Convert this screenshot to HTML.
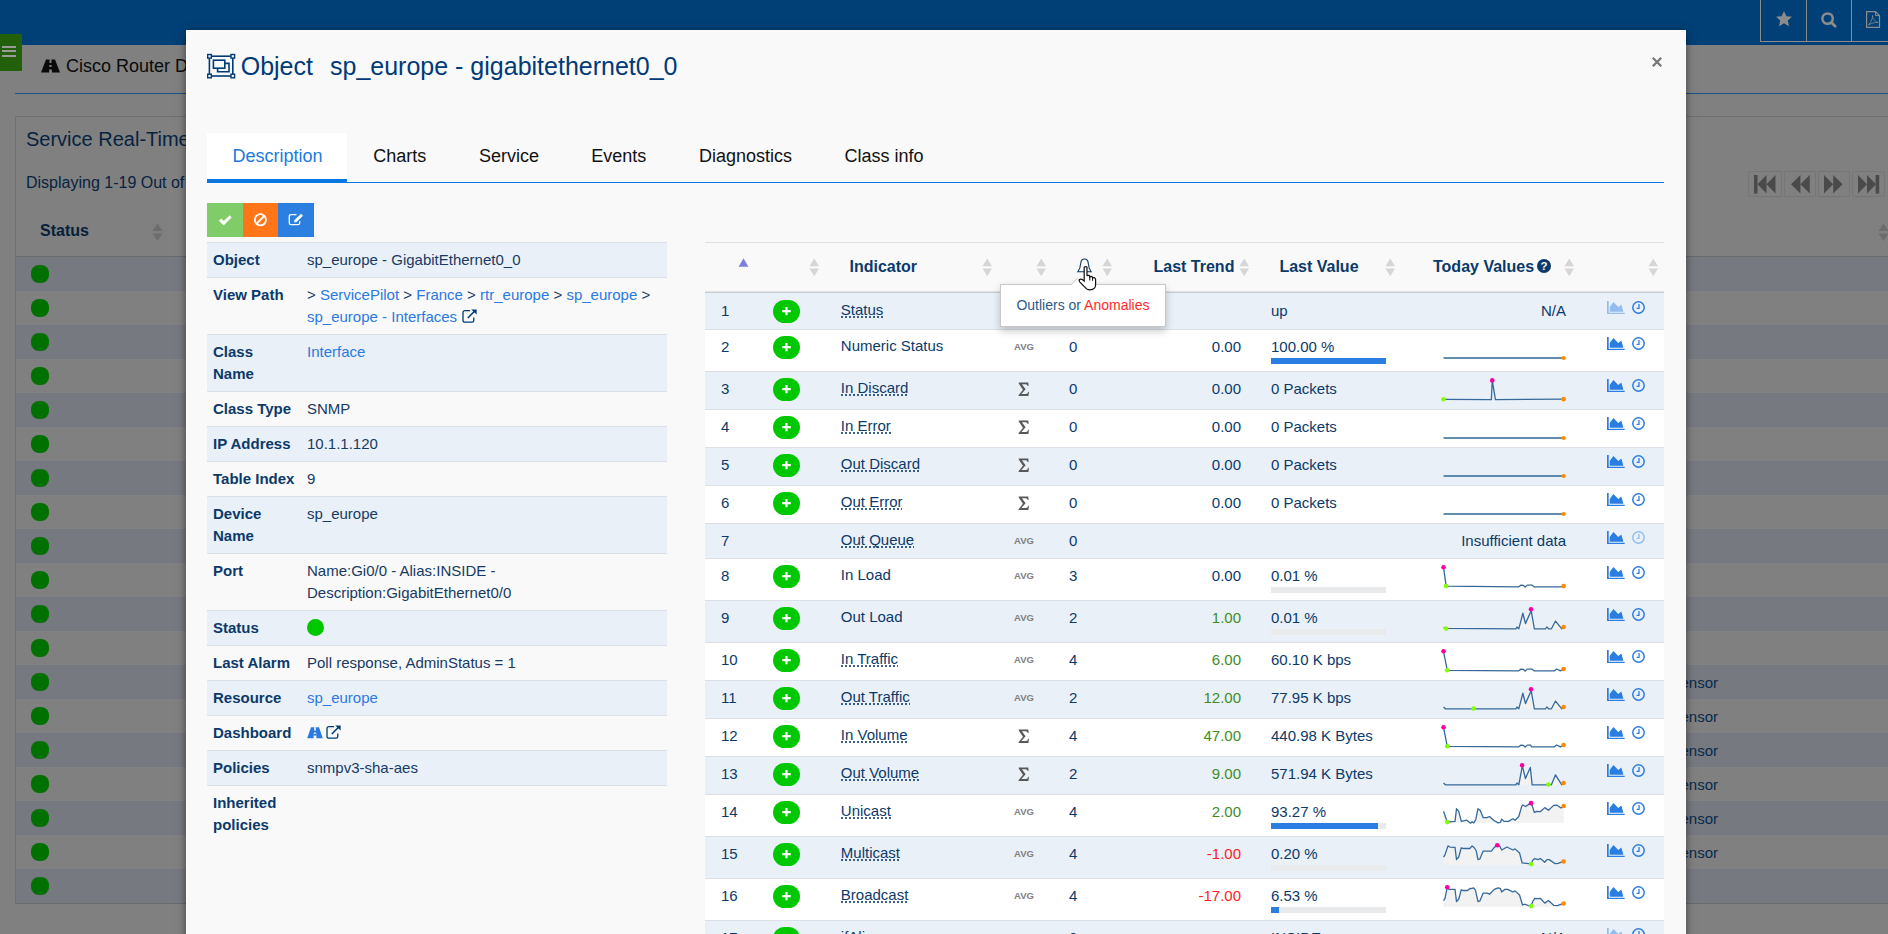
<!DOCTYPE html><html><head><meta charset="utf-8"><style>
*{box-sizing:border-box;margin:0;padding:0}
html,body{width:1888px;height:934px;overflow:hidden}
body{background:#808080;font-family:"Liberation Sans",sans-serif;position:relative;color:#0b3a6a}
.a{position:absolute;white-space:nowrap}
svg{position:absolute;overflow:visible}
.t15{font-size:15px;line-height:20px}
.b{font-weight:bold}
.dl::after{content:"";position:absolute;left:0;right:0;top:17px;height:2px;background:repeating-linear-gradient(90deg,rgba(11,58,106,.8) 0 2px,transparent 2px 4px)}
.sort{position:absolute;width:11px;height:19px}
</style></head><body><div class="a" style="left:0px;top:0px;width:1888px;height:45px;background:#004077;"></div>
<div class="a" style="left:1760px;top:0;width:128px;height:42px;border:1px solid #8a8a8a;border-top:none;border-right:none"></div>
<div class="a" style="left:1806px;top:0px;width:1px;height:42px;background:#8a8a8a;"></div>
<div class="a" style="left:1851px;top:0px;width:1px;height:42px;background:#8a8a8a;"></div>
<svg style="left:1776px;top:11px" width="16" height="16" viewBox="0 0 16 16"><path d="M8 0 L10.4 5.2 L16 5.8 L11.8 9.5 L13 15.2 L8 12.3 L3 15.2 L4.2 9.5 L0 5.8 L5.6 5.2 Z" fill="#8c8c8c"/></svg>
<svg style="left:1821px;top:12px" width="16" height="16" viewBox="0 0 16 16"><circle cx="6.6" cy="6.6" r="5.2" fill="none" stroke="#8c8c8c" stroke-width="2.5"/><path d="M10.2 10.2 L14.2 14.2" stroke="#8c8c8c" stroke-width="2.8" stroke-linecap="round"/></svg>
<svg style="left:1866px;top:11px" width="16" height="18" viewBox="0 0 16 18"><path d="M0.6 0.6 H9.5 L13.5 4.6 V16.4 H0.6 Z" fill="none" stroke="#8c8c8c" stroke-width="1.2"/><path d="M9.5 0.6 V4.6 H13.5" fill="none" stroke="#8c8c8c" stroke-width="1"/><path d="M2.5 14 C5 11 7 7 6.5 4.5 C6.2 7 8.5 10.5 12 11.5 C9 11 5 12.5 2.5 14" fill="none" stroke="#8c8c8c" stroke-width="0.8"/></svg>
<div class="a" style="left:0px;top:34px;width:22px;height:37px;background:#23600c;"></div>
<div class="a" style="left:2px;top:45.6px;width:14px;height:2.3px;background:#9a9a9a;"></div>
<div class="a" style="left:2px;top:50.2px;width:14px;height:2.3px;background:#9a9a9a;"></div>
<div class="a" style="left:2px;top:54.8px;width:14px;height:2.3px;background:#9a9a9a;"></div>
<svg style="left:41px;top:59px" width="19" height="14" viewBox="0 0 19 14"><path d="M0 13.5 L5 0.5 H8.6 L8.1 13.5 Z M10.4 0.5 H14 L19 13.5 H10.9 Z" fill="#0a0a0a"/><rect x="8" y="4" width="3" height="2" fill="#0a0a0a"/><rect x="8" y="8" width="3" height="2.4" fill="#0a0a0a"/></svg>
<div class="a" style="left:66px;top:55.26px;font-size:18px;line-height:22px;color:#0a0a0a;">Cisco Router Dashboard</div>
<div class="a" style="left:15px;top:93px;width:1873px;height:1px;background:#1c4f85;"></div>
<div class="a" style="left:15px;top:116px;width:1880px;height:788px;border:1px solid #707070;border-right:none"></div>
<div class="a" style="left:26px;top:126.57px;font-size:20px;line-height:25px;color:#072340;">Service Real-Time Status</div>
<div class="a" style="left:26px;top:173.26px;font-size:16px;line-height:20px;color:#072340;">Displaying 1-19 Out of 19</div>
<div class="a" style="left:40px;top:221.46px;font-size:16px;line-height:20px;color:#061f3a;font-weight:bold;">Status</div>
<svg style="left:152px;top:223px" width="11" height="19" viewBox="0 0 11 19"><path d="M0.5 8 L5.5 0.5 L10.5 8 Z M0.5 10.5 L5.5 18 L10.5 10.5 Z" fill="#6c6c6c"/></svg>
<svg style="left:1878px;top:223px" width="11" height="19" viewBox="0 0 11 19"><path d="M0.5 8 L5.5 0.5 L10.5 8 Z M0.5 10.5 L5.5 18 L10.5 10.5 Z" fill="#6c6c6c"/></svg>
<div class="a" style="left:16px;top:256px;width:1872px;height:1px;background:#6a6a6a;"></div>
<div class="a" style="left:16px;top:257px;width:1872px;height:34px;background:#76797f;"></div>
<div class="a" style="left:31px;top:265px;width:18px;height:17.5px;border-radius:8px;background:#007000"></div>
<div class="a" style="left:31px;top:299px;width:18px;height:17.5px;border-radius:8px;background:#007000"></div>
<div class="a" style="left:16px;top:325px;width:1872px;height:34px;background:#76797f;"></div>
<div class="a" style="left:31px;top:333px;width:18px;height:17.5px;border-radius:8px;background:#007000"></div>
<div class="a" style="left:31px;top:367px;width:18px;height:17.5px;border-radius:8px;background:#007000"></div>
<div class="a" style="left:16px;top:393px;width:1872px;height:34px;background:#76797f;"></div>
<div class="a" style="left:31px;top:401px;width:18px;height:17.5px;border-radius:8px;background:#007000"></div>
<div class="a" style="left:31px;top:435px;width:18px;height:17.5px;border-radius:8px;background:#007000"></div>
<div class="a" style="left:16px;top:461px;width:1872px;height:34px;background:#76797f;"></div>
<div class="a" style="left:31px;top:469px;width:18px;height:17.5px;border-radius:8px;background:#007000"></div>
<div class="a" style="left:31px;top:503px;width:18px;height:17.5px;border-radius:8px;background:#007000"></div>
<div class="a" style="left:16px;top:529px;width:1872px;height:34px;background:#76797f;"></div>
<div class="a" style="left:31px;top:537px;width:18px;height:17.5px;border-radius:8px;background:#007000"></div>
<div class="a" style="left:31px;top:571px;width:18px;height:17.5px;border-radius:8px;background:#007000"></div>
<div class="a" style="left:16px;top:597px;width:1872px;height:34px;background:#76797f;"></div>
<div class="a" style="left:31px;top:605px;width:18px;height:17.5px;border-radius:8px;background:#007000"></div>
<div class="a" style="left:31px;top:639px;width:18px;height:17.5px;border-radius:8px;background:#007000"></div>
<div class="a" style="left:16px;top:665px;width:1872px;height:34px;background:#76797f;"></div>
<div class="a" style="left:31px;top:673px;width:18px;height:17.5px;border-radius:8px;background:#007000"></div>
<div class="a" style="left:31px;top:707px;width:18px;height:17.5px;border-radius:8px;background:#007000"></div>
<div class="a" style="left:16px;top:733px;width:1872px;height:34px;background:#76797f;"></div>
<div class="a" style="left:31px;top:741px;width:18px;height:17.5px;border-radius:8px;background:#007000"></div>
<div class="a" style="left:31px;top:775px;width:18px;height:17.5px;border-radius:8px;background:#007000"></div>
<div class="a" style="left:16px;top:801px;width:1872px;height:34px;background:#76797f;"></div>
<div class="a" style="left:31px;top:809px;width:18px;height:17.5px;border-radius:8px;background:#007000"></div>
<div class="a" style="left:31px;top:843px;width:18px;height:17.5px;border-radius:8px;background:#007000"></div>
<div class="a" style="left:16px;top:869px;width:1872px;height:34px;background:#76797f;"></div>
<div class="a" style="left:31px;top:877px;width:18px;height:17.5px;border-radius:8px;background:#007000"></div>
<div class="a" style="left:15px;top:903px;width:1873px;height:1px;background:#6a6a6a;"></div>
<div class="a" style="left:1670.5px;top:672.80px;font-size:15px;line-height:19px;color:#062a4d;">Sensor</div>
<div class="a" style="left:1670.5px;top:706.80px;font-size:15px;line-height:19px;color:#062a4d;">Sensor</div>
<div class="a" style="left:1670.5px;top:740.80px;font-size:15px;line-height:19px;color:#062a4d;">Sensor</div>
<div class="a" style="left:1670.5px;top:774.80px;font-size:15px;line-height:19px;color:#062a4d;">Sensor</div>
<div class="a" style="left:1670.5px;top:808.80px;font-size:15px;line-height:19px;color:#062a4d;">Sensor</div>
<div class="a" style="left:1670.5px;top:842.80px;font-size:15px;line-height:19px;color:#062a4d;">Sensor</div>
<div class="a" style="left:1748px;top:171px;width:34px;height:26px;border:1px solid #767676;border-radius:2px"></div>
<div class="a" style="left:1784px;top:171px;width:32px;height:26px;border:1px solid #767676;border-radius:2px"></div>
<div class="a" style="left:1818px;top:171px;width:32px;height:26px;border:1px solid #767676;border-radius:2px"></div>
<div class="a" style="left:1852px;top:171px;width:33px;height:26px;border:1px solid #767676;border-radius:2px"></div>
<svg style="left:1754.2px;top:175px" width="22" height="19" viewBox="0 0 22 19"><rect x="0" y="0" width="3.5" height="18.6" fill="#4a4a4a"/><path d="M3.5 9.3 L12.5 0 V18.6 Z M12.5 9.3 L21.5 0 V18.6 Z" fill="#4a4a4a"/></svg>
<svg style="left:1791px;top:175px" width="19" height="19" viewBox="0 0 19 19"><path d="M0 9.3 L9.4 0 V18.6 Z M9.4 9.3 L18.8 0 V18.6 Z" fill="#4a4a4a"/></svg>
<svg style="left:1823.5px;top:175px" width="19" height="19" viewBox="0 0 19 19"><path d="M18.6 9.3 L9.2 0 V18.6 Z M9.2 9.3 L0 0 V18.6 Z" fill="#4a4a4a"/></svg>
<svg style="left:1857.5px;top:175px" width="22" height="19" viewBox="0 0 22 19"><path d="M18 9.3 L9 0 V18.6 Z M9 9.3 L0 0 V18.6 Z" fill="#4a4a4a"/><rect x="17.6" y="0" width="3.6" height="18.6" fill="#4a4a4a"/></svg>
<div class="a" style="left:186px;top:30px;width:1500px;height:950px;background:#f9f9f9;border:1px solid #fdfbf8;box-shadow:0 2px 8px rgba(0,0,0,.5)"></div>
<svg style="left:207px;top:54px" width="29" height="25" viewBox="0 0 29 25"><g fill="none" stroke="#003a78" stroke-width="1.6"><rect x="2.4" y="2.2" width="23.4" height="19.8"/><rect x="6.4" y="6.2" width="11.4" height="8"/><path d="M17.8 9.4 H22 V17.8 H10.6 V14.2"/></g><g fill="#f9f9f9" stroke="#003a78" stroke-width="1.4"><rect x="0.7" y="0.5" width="3.6" height="3.6"/><rect x="24" y="0.5" width="3.6" height="3.6"/><rect x="0.7" y="20.2" width="3.6" height="3.6"/><rect x="24" y="20.2" width="3.6" height="3.6"/></g></svg>
<div class="a" style="left:240.7px;top:50.84px;font-size:25px;line-height:31px;color:#003a78;">Object</div>
<div class="a" style="left:330px;top:50.84px;font-size:25px;line-height:31px;color:#003a78;">sp_europe - gigabitethernet0_0</div>
<svg style="left:1651px;top:56px" width="12" height="12" viewBox="0 0 12 12"><path d="M1.8 1.8 L10.2 10.2 M10.2 1.8 L1.8 10.2" stroke="#777" stroke-width="2.3"/></svg>
<div class="a" style="left:207px;top:133px;width:140px;height:46px;background:#ffffff;"></div>
<div class="a" style="left:207px;top:179px;width:140px;height:4px;background:#0a78e2;"></div>
<div class="a" style="left:347px;top:182px;width:1317px;height:1px;background:#0a78e2;"></div>
<div class="a" style="left:232.5px;top:145.06px;font-size:18px;line-height:22px;color:#1a7ae0;">Description</div>
<div class="a" style="left:373.2px;top:145.06px;font-size:18px;line-height:22px;color:#111111;">Charts</div>
<div class="a" style="left:478.9px;top:145.06px;font-size:18px;line-height:22px;color:#111111;">Service</div>
<div class="a" style="left:591.3px;top:145.06px;font-size:18px;line-height:22px;color:#111111;">Events</div>
<div class="a" style="left:698.9px;top:145.06px;font-size:18px;line-height:22px;color:#111111;">Diagnostics</div>
<div class="a" style="left:844.5px;top:145.06px;font-size:18px;line-height:22px;color:#111111;">Class info</div>
<div class="a" style="left:207px;top:203px;width:36px;height:34px;background:#80cc68;"></div>
<div class="a" style="left:243px;top:203px;width:35px;height:34px;background:#ff7518;"></div>
<div class="a" style="left:278px;top:203px;width:36px;height:34px;background:#2a7fe0;"></div>
<svg style="left:218px;top:215px" width="14" height="12" viewBox="0 0 14 12"><path d="M0.9 5.7 L3.3 3.6 L5.7 6 L11.7 0.2 L13.6 2.6 L5.6 10.4 Z" fill="#fff"/></svg>
<svg style="left:253px;top:213px" width="14" height="14" viewBox="0 0 14 14"><circle cx="7.4" cy="6.8" r="5.6" fill="none" stroke="#fff" stroke-width="1.8"/><path d="M11.2 3 L3.6 10.6" stroke="#fff" stroke-width="1.8"/></svg>
<svg style="left:288px;top:213px" width="16" height="14" viewBox="0 0 16 14"><path d="M8.5 1.6 H3 Q1.3 1.6 1.3 3.3 V10 Q1.3 11.7 3 11.7 H10 Q11.7 11.7 11.7 10 V8" fill="none" stroke="#fff" stroke-width="1.3"/><path d="M6 9.5 L6.5 7 L13 0.8 L15 2.7 L8.5 9 Z" fill="#fff"/></svg>
<div class="a" style="left:207px;top:242px;width:460px;height:1px;background:#dcdfe4;"></div>
<div class="a" style="left:207px;top:243px;width:460px;height:34px;background:#eaf0f8;"></div>
<div class="a" style="left:213px;top:250.30px;font-size:15px;line-height:19px;color:#0b3a6a;font-weight:bold;">Object</div>
<div class="a" style="left:307px;top:250.30px;font-size:15px;line-height:19px;color:#173a62;">sp_europe - GigabitEthernet0_0</div>
<div class="a" style="left:207px;top:277px;width:460px;height:1px;background:#dcdfe4;"></div>
<div class="a" style="left:213px;top:285.30px;font-size:15px;line-height:19px;color:#0b3a6a;font-weight:bold;">View Path</div>
<div class="a" style="left:307px;top:285.30px;font-size:15px;line-height:19px;color:#173a62;">&gt; <span style="color:#2a7ae2">ServicePilot</span> &gt; <span style="color:#2a7ae2">France</span> &gt; <span style="color:#2a7ae2">rtr_europe</span> &gt; <span style="color:#2a7ae2">sp_europe</span> &gt;</div>
<div class="a" style="left:307px;top:307.30px;font-size:15px;line-height:19px;color:#173a62;"><span style="color:#2a7ae2">sp_europe - Interfaces</span></div>
<div class="a" style="left:207px;top:334px;width:460px;height:1px;background:#dcdfe4;"></div>
<div class="a" style="left:207px;top:335px;width:460px;height:56px;background:#eaf0f8;"></div>
<div class="a" style="left:213px;top:342.30px;font-size:15px;line-height:19px;color:#0b3a6a;font-weight:bold;">Class</div>
<div class="a" style="left:213px;top:364.30px;font-size:15px;line-height:19px;color:#0b3a6a;font-weight:bold;">Name</div>
<div class="a" style="left:307px;top:342.30px;font-size:15px;line-height:19px;color:#173a62;"><span style="color:#2a7ae2">Interface</span></div>
<div class="a" style="left:207px;top:391px;width:460px;height:1px;background:#dcdfe4;"></div>
<div class="a" style="left:213px;top:399.30px;font-size:15px;line-height:19px;color:#0b3a6a;font-weight:bold;">Class Type</div>
<div class="a" style="left:307px;top:399.30px;font-size:15px;line-height:19px;color:#173a62;">SNMP</div>
<div class="a" style="left:207px;top:426px;width:460px;height:1px;background:#dcdfe4;"></div>
<div class="a" style="left:207px;top:427px;width:460px;height:34px;background:#eaf0f8;"></div>
<div class="a" style="left:213px;top:434.30px;font-size:15px;line-height:19px;color:#0b3a6a;font-weight:bold;">IP Address</div>
<div class="a" style="left:307px;top:434.30px;font-size:15px;line-height:19px;color:#173a62;">10.1.1.120</div>
<div class="a" style="left:207px;top:461px;width:460px;height:1px;background:#dcdfe4;"></div>
<div class="a" style="left:213px;top:469.30px;font-size:15px;line-height:19px;color:#0b3a6a;font-weight:bold;">Table Index</div>
<div class="a" style="left:307px;top:469.30px;font-size:15px;line-height:19px;color:#173a62;">9</div>
<div class="a" style="left:207px;top:496px;width:460px;height:1px;background:#dcdfe4;"></div>
<div class="a" style="left:207px;top:497px;width:460px;height:56px;background:#eaf0f8;"></div>
<div class="a" style="left:213px;top:504.30px;font-size:15px;line-height:19px;color:#0b3a6a;font-weight:bold;">Device</div>
<div class="a" style="left:213px;top:526.30px;font-size:15px;line-height:19px;color:#0b3a6a;font-weight:bold;">Name</div>
<div class="a" style="left:307px;top:504.30px;font-size:15px;line-height:19px;color:#173a62;">sp_europe</div>
<div class="a" style="left:207px;top:553px;width:460px;height:1px;background:#dcdfe4;"></div>
<div class="a" style="left:213px;top:561.30px;font-size:15px;line-height:19px;color:#0b3a6a;font-weight:bold;">Port</div>
<div class="a" style="left:307px;top:561.30px;font-size:15px;line-height:19px;color:#173a62;">Name:Gi0/0 - Alias:INSIDE -</div>
<div class="a" style="left:307px;top:583.30px;font-size:15px;line-height:19px;color:#173a62;">Description:GigabitEthernet0/0</div>
<div class="a" style="left:207px;top:610px;width:460px;height:1px;background:#dcdfe4;"></div>
<div class="a" style="left:207px;top:611px;width:460px;height:34px;background:#eaf0f8;"></div>
<div class="a" style="left:213px;top:618.30px;font-size:15px;line-height:19px;color:#0b3a6a;font-weight:bold;">Status</div>
<div class="a" style="left:307px;top:619px;width:17px;height:17px;border-radius:50%;background:#00c800"></div>
<div class="a" style="left:207px;top:645px;width:460px;height:1px;background:#dcdfe4;"></div>
<div class="a" style="left:213px;top:653.30px;font-size:15px;line-height:19px;color:#0b3a6a;font-weight:bold;">Last Alarm</div>
<div class="a" style="left:307px;top:653.30px;font-size:15px;line-height:19px;color:#173a62;">Poll response, AdminStatus = 1</div>
<div class="a" style="left:207px;top:680px;width:460px;height:1px;background:#dcdfe4;"></div>
<div class="a" style="left:207px;top:681px;width:460px;height:34px;background:#eaf0f8;"></div>
<div class="a" style="left:213px;top:688.30px;font-size:15px;line-height:19px;color:#0b3a6a;font-weight:bold;">Resource</div>
<div class="a" style="left:307px;top:688.30px;font-size:15px;line-height:19px;color:#173a62;"><span style="color:#2a7ae2">sp_europe</span></div>
<div class="a" style="left:207px;top:715px;width:460px;height:1px;background:#dcdfe4;"></div>
<div class="a" style="left:213px;top:723.30px;font-size:15px;line-height:19px;color:#0b3a6a;font-weight:bold;">Dashboard</div>
<div class="a" style="left:207px;top:750px;width:460px;height:1px;background:#dcdfe4;"></div>
<div class="a" style="left:207px;top:751px;width:460px;height:34px;background:#eaf0f8;"></div>
<div class="a" style="left:213px;top:758.30px;font-size:15px;line-height:19px;color:#0b3a6a;font-weight:bold;">Policies</div>
<div class="a" style="left:307px;top:758.30px;font-size:15px;line-height:19px;color:#173a62;">snmpv3-sha-aes</div>
<div class="a" style="left:207px;top:785px;width:460px;height:1px;background:#dcdfe4;"></div>
<div class="a" style="left:213px;top:793.30px;font-size:15px;line-height:19px;color:#0b3a6a;font-weight:bold;">Inherited</div>
<div class="a" style="left:213px;top:815.30px;font-size:15px;line-height:19px;color:#0b3a6a;font-weight:bold;">policies</div>
<svg style="left:462px;top:309px" width="16" height="14" viewBox="0 0 16 14"><path d="M8 1.6 H3 Q1 1.6 1 3.6 V11.5 Q1 13.2 3 13.2 H10 Q11.8 13.2 11.8 11.5 V8.5" fill="none" stroke="#003a78" stroke-width="1.3"/><path d="M5.8 9 L13 1.8" stroke="#003a78" stroke-width="1.6"/><path d="M9.3 0.4 H14.6 V5.6 Z" fill="#003a78"/></svg>
<svg style="left:307px;top:727px" width="16" height="12" viewBox="0 0 16 12"><path d="M0.2 11.2 L4 0.2 H7.3 L6.5 11.2 Z M8.7 0.2 H12 L15.8 11.2 H9.5 Z" fill="#2a7ae2"/><rect x="6.8" y="3.5" width="2.4" height="2" fill="#2a7ae2"/><rect x="6.6" y="6.8" width="2.8" height="1.8" fill="#2a7ae2"/></svg>
<svg style="left:326px;top:725px" width="16" height="14" viewBox="0 0 16 14"><path d="M8 1.6 H3 Q1 1.6 1 3.6 V11.5 Q1 13.2 3 13.2 H10 Q11.8 13.2 11.8 11.5 V8.5" fill="none" stroke="#003a78" stroke-width="1.3"/><path d="M5.8 9 L13 1.8" stroke="#003a78" stroke-width="1.6"/><path d="M9.3 0.4 H14.6 V5.6 Z" fill="#003a78"/></svg>
<div class="a" style="left:705px;top:242px;width:959px;height:1px;background:#dcdfe4;"></div>
<svg style="left:738px;top:258px" width="12" height="10" viewBox="0 0 12 10"><path d="M0.6 8.8 L5.5 0.3 L10.4 8.8 Z" fill="#7f7fdc"/></svg>
<svg style="left:809px;top:258px" width="11" height="19" viewBox="0 0 11 19"><path d="M0.5 8.3 L5.25 0.5 L10 8.3 Z M0.5 10.5 L5.25 18.3 L10 10.5 Z" fill="#d6d6d6"/></svg>
<svg style="left:982px;top:258px" width="11" height="19" viewBox="0 0 11 19"><path d="M0.5 8.3 L5.25 0.5 L10 8.3 Z M0.5 10.5 L5.25 18.3 L10 10.5 Z" fill="#d6d6d6"/></svg>
<svg style="left:1036px;top:258px" width="11" height="19" viewBox="0 0 11 19"><path d="M0.5 8.3 L5.25 0.5 L10 8.3 Z M0.5 10.5 L5.25 18.3 L10 10.5 Z" fill="#d6d6d6"/></svg>
<svg style="left:1102px;top:258px" width="11" height="19" viewBox="0 0 11 19"><path d="M0.5 8.3 L5.25 0.5 L10 8.3 Z M0.5 10.5 L5.25 18.3 L10 10.5 Z" fill="#d6d6d6"/></svg>
<svg style="left:1239px;top:258px" width="11" height="19" viewBox="0 0 11 19"><path d="M0.5 8.3 L5.25 0.5 L10 8.3 Z M0.5 10.5 L5.25 18.3 L10 10.5 Z" fill="#d6d6d6"/></svg>
<svg style="left:1384.5px;top:258px" width="11" height="19" viewBox="0 0 11 19"><path d="M0.5 8.3 L5.25 0.5 L10 8.3 Z M0.5 10.5 L5.25 18.3 L10 10.5 Z" fill="#d6d6d6"/></svg>
<svg style="left:1564px;top:258px" width="11" height="19" viewBox="0 0 11 19"><path d="M0.5 8.3 L5.25 0.5 L10 8.3 Z M0.5 10.5 L5.25 18.3 L10 10.5 Z" fill="#d6d6d6"/></svg>
<svg style="left:1647.5px;top:258px" width="11" height="19" viewBox="0 0 11 19"><path d="M0.5 8.3 L5.25 0.5 L10 8.3 Z M0.5 10.5 L5.25 18.3 L10 10.5 Z" fill="#d6d6d6"/></svg>
<div class="a" style="left:849.5px;top:257.46px;font-size:16px;line-height:20px;color:#0b3a6a;font-weight:bold;">Indicator</div>
<div class="a" style="left:1153.5px;top:257.46px;font-size:16px;line-height:20px;color:#0b3a6a;font-weight:bold;">Last Trend</div>
<div class="a" style="left:1279.4px;top:257.46px;font-size:16px;line-height:20px;color:#0b3a6a;font-weight:bold;">Last Value</div>
<div class="a" style="left:1433px;top:257.46px;font-size:16px;line-height:20px;color:#0b3a6a;font-weight:bold;">Today Values</div>
<svg style="left:1537px;top:259px" width="14" height="14" viewBox="0 0 14 14"><circle cx="7" cy="7" r="7" fill="#0b3a6a"/><text x="7" y="11.3" font-family="Liberation Sans" font-weight="bold" font-size="11.5" fill="#f9f9f9" text-anchor="middle">?</text></svg>
<div class="a" style="left:705px;top:291px;width:959px;height:1px;background:#e0e2e6;"></div>
<div class="a" style="left:705px;top:292px;width:959px;height:1px;background:#c9ccd1;"></div>
<div class="a" style="left:705px;top:293px;width:959px;height:36px;background:#eaf0f8;"></div>
<div class="a" style="left:721px;top:300.60px;font-size:15px;line-height:19px;color:#0b3a6a;">1</div>
<div class="a" style="left:773px;top:300px;width:27px;height:23px;border-radius:12px;background:#00c800"></div>
<svg style="left:782px;top:307px" width="9" height="9" viewBox="0 0 9 9"><path d="M0.2 4.1 H8.8 M4.5 0 V8.2" stroke="#fff" stroke-width="2.2"/></svg>
<div class="a dl" style="left:840.8px;top:299.10px;font-size:15px;line-height:22px;color:#0b3a6a">Status</div>
<div class="a" style="left:1271px;top:300.60px;font-size:15px;line-height:19px;color:#0b3a6a;">up</div>
<div class="a" style="right:322px;top:300.60px;font-size:15px;line-height:19px;color:#0b3a6a;">N/A</div>
<svg style="left:1607px;top:300.5px" width="18" height="13" viewBox="0 0 18 13"><path d="M0 0 H1.7 V11.7 H17.7 V13 H0 Z" fill="#93bdf0"/><path d="M2.7 10.8 V5.9 L6.4 1.1 L11.3 5.9 L14.3 3.6 L16.4 10.8 Z" fill="#93bdf0"/></svg>
<svg style="left:1631.5px;top:301px" width="14" height="14" viewBox="0 0 14 14"><circle cx="6.5" cy="6.5" r="5.7" fill="none" stroke="#2a7de1" stroke-width="1.5"/><path d="M7 3 V7.4 H4.6" fill="none" stroke="#2a7de1" stroke-width="1.3"/></svg>
<div class="a" style="left:705px;top:329px;width:959px;height:1px;background:#dcdfe4;"></div>
<div class="a" style="left:705px;top:330px;width:959px;height:41px;background:#ffffff;"></div>
<div class="a" style="left:721px;top:336.60px;font-size:15px;line-height:19px;color:#0b3a6a;">2</div>
<div class="a" style="left:773px;top:336px;width:27px;height:23px;border-radius:12px;background:#00c800"></div>
<svg style="left:782px;top:343px" width="9" height="9" viewBox="0 0 9 9"><path d="M0.2 4.1 H8.8 M4.5 0 V8.2" stroke="#fff" stroke-width="2.2"/></svg>
<div class="a" style="left:840.8px;top:335.10px;font-size:15px;line-height:22px;color:#0b3a6a">Numeric Status</div>
<div class="a" style="left:1014px;top:341.11px;font-size:9.5px;line-height:12px;color:#808080;font-weight:bold;">AVG</div>
<div class="a" style="left:1069px;top:336.60px;font-size:15px;line-height:19px;color:#0b3a6a;">0</div>
<div class="a" style="right:647px;top:336.60px;font-size:15px;line-height:19px;color:#0b3a6a;">0.00</div>
<div class="a" style="left:1271px;top:336.60px;font-size:15px;line-height:19px;color:#0b3a6a;">100.00 %</div>
<div class="a" style="left:1271px;top:358px;width:115px;height:6px;background:#e8eaec;"></div>
<div class="a" style="left:1271px;top:358px;width:115px;height:6px;background:#2a7de1;"></div>
<svg style="left:1443px;top:354.6px" width="124" height="6" viewBox="0 0 124 6"><path d="M0.5 3 H120.7" stroke="#2f6a95" stroke-width="1.4"/><circle cx="120.7" cy="3" r="2.1" fill="#ff8a00"/></svg>
<svg style="left:1607px;top:336.5px" width="18" height="13" viewBox="0 0 18 13"><path d="M0 0 H1.7 V11.7 H17.7 V13 H0 Z" fill="#2a7de1"/><path d="M2.7 10.8 V5.9 L6.4 1.1 L11.3 5.9 L14.3 3.6 L16.4 10.8 Z" fill="#2a7de1"/></svg>
<svg style="left:1631.5px;top:337px" width="14" height="14" viewBox="0 0 14 14"><circle cx="6.5" cy="6.5" r="5.7" fill="none" stroke="#2a7de1" stroke-width="1.5"/><path d="M7 3 V7.4 H4.6" fill="none" stroke="#2a7de1" stroke-width="1.3"/></svg>
<div class="a" style="left:705px;top:371px;width:959px;height:1px;background:#dcdfe4;"></div>
<div class="a" style="left:705px;top:372px;width:959px;height:37px;background:#eaf0f8;"></div>
<div class="a" style="left:721px;top:378.60px;font-size:15px;line-height:19px;color:#0b3a6a;">3</div>
<div class="a" style="left:773px;top:378px;width:27px;height:23px;border-radius:12px;background:#00c800"></div>
<svg style="left:782px;top:385px" width="9" height="9" viewBox="0 0 9 9"><path d="M0.2 4.1 H8.8 M4.5 0 V8.2" stroke="#fff" stroke-width="2.2"/></svg>
<div class="a dl" style="left:840.8px;top:377.10px;font-size:15px;line-height:22px;color:#0b3a6a">In Discard</div>
<svg style="left:1018px;top:382px" width="11.5" height="14.5" viewBox="0 0 13 15" preserveAspectRatio="none"><path d="M0.8 0.6 H11.6 L12 4.2 H11 Q10.6 2.4 8.6 2.4 H4.4 L8.6 7.6 L3.8 12.4 H9 Q11 12.4 11.6 10 H12.4 L11.8 14.4 H0.6 V13.6 L5.6 8 L0.8 1.6 Z" fill="#585858"/></svg>
<div class="a" style="left:1069px;top:378.60px;font-size:15px;line-height:19px;color:#0b3a6a;">0</div>
<div class="a" style="right:647px;top:378.60px;font-size:15px;line-height:19px;color:#0b3a6a;">0.00</div>
<div class="a" style="left:1271px;top:378.60px;font-size:15px;line-height:19px;color:#0b3a6a;">0 Packets</div>
<svg style="left:1435px;top:370px" width="140" height="40" viewBox="0 0 1888 539"><path d="M115,395 L760,400 L772,140 L815,400 L1735,393" fill="none" stroke="#36699a" stroke-width="17.5" stroke-linejoin="round"/><circle cx="115" cy="395" r="31" fill="#80ff00"/><circle cx="772" cy="140" r="31" fill="#ff00a0"/><circle cx="1735" cy="393" r="31" fill="#ff8a00"/></svg>
<svg style="left:1607px;top:378.5px" width="18" height="13" viewBox="0 0 18 13"><path d="M0 0 H1.7 V11.7 H17.7 V13 H0 Z" fill="#2a7de1"/><path d="M2.7 10.8 V5.9 L6.4 1.1 L11.3 5.9 L14.3 3.6 L16.4 10.8 Z" fill="#2a7de1"/></svg>
<svg style="left:1631.5px;top:379px" width="14" height="14" viewBox="0 0 14 14"><circle cx="6.5" cy="6.5" r="5.7" fill="none" stroke="#2a7de1" stroke-width="1.5"/><path d="M7 3 V7.4 H4.6" fill="none" stroke="#2a7de1" stroke-width="1.3"/></svg>
<div class="a" style="left:705px;top:409px;width:959px;height:1px;background:#dcdfe4;"></div>
<div class="a" style="left:705px;top:410px;width:959px;height:37px;background:#ffffff;"></div>
<div class="a" style="left:721px;top:416.60px;font-size:15px;line-height:19px;color:#0b3a6a;">4</div>
<div class="a" style="left:773px;top:416px;width:27px;height:23px;border-radius:12px;background:#00c800"></div>
<svg style="left:782px;top:423px" width="9" height="9" viewBox="0 0 9 9"><path d="M0.2 4.1 H8.8 M4.5 0 V8.2" stroke="#fff" stroke-width="2.2"/></svg>
<div class="a dl" style="left:840.8px;top:415.10px;font-size:15px;line-height:22px;color:#0b3a6a">In Error</div>
<svg style="left:1018px;top:420px" width="11.5" height="14.5" viewBox="0 0 13 15" preserveAspectRatio="none"><path d="M0.8 0.6 H11.6 L12 4.2 H11 Q10.6 2.4 8.6 2.4 H4.4 L8.6 7.6 L3.8 12.4 H9 Q11 12.4 11.6 10 H12.4 L11.8 14.4 H0.6 V13.6 L5.6 8 L0.8 1.6 Z" fill="#585858"/></svg>
<div class="a" style="left:1069px;top:416.60px;font-size:15px;line-height:19px;color:#0b3a6a;">0</div>
<div class="a" style="right:647px;top:416.60px;font-size:15px;line-height:19px;color:#0b3a6a;">0.00</div>
<div class="a" style="left:1271px;top:416.60px;font-size:15px;line-height:19px;color:#0b3a6a;">0 Packets</div>
<svg style="left:1443px;top:434.6px" width="124" height="6" viewBox="0 0 124 6"><path d="M0.5 3 H120.7" stroke="#2f6a95" stroke-width="1.4"/><circle cx="120.7" cy="3" r="2.1" fill="#ff8a00"/></svg>
<svg style="left:1607px;top:416.5px" width="18" height="13" viewBox="0 0 18 13"><path d="M0 0 H1.7 V11.7 H17.7 V13 H0 Z" fill="#2a7de1"/><path d="M2.7 10.8 V5.9 L6.4 1.1 L11.3 5.9 L14.3 3.6 L16.4 10.8 Z" fill="#2a7de1"/></svg>
<svg style="left:1631.5px;top:417px" width="14" height="14" viewBox="0 0 14 14"><circle cx="6.5" cy="6.5" r="5.7" fill="none" stroke="#2a7de1" stroke-width="1.5"/><path d="M7 3 V7.4 H4.6" fill="none" stroke="#2a7de1" stroke-width="1.3"/></svg>
<div class="a" style="left:705px;top:447px;width:959px;height:1px;background:#dcdfe4;"></div>
<div class="a" style="left:705px;top:448px;width:959px;height:37px;background:#eaf0f8;"></div>
<div class="a" style="left:721px;top:454.60px;font-size:15px;line-height:19px;color:#0b3a6a;">5</div>
<div class="a" style="left:773px;top:454px;width:27px;height:23px;border-radius:12px;background:#00c800"></div>
<svg style="left:782px;top:461px" width="9" height="9" viewBox="0 0 9 9"><path d="M0.2 4.1 H8.8 M4.5 0 V8.2" stroke="#fff" stroke-width="2.2"/></svg>
<div class="a dl" style="left:840.8px;top:453.10px;font-size:15px;line-height:22px;color:#0b3a6a">Out Discard</div>
<svg style="left:1018px;top:458px" width="11.5" height="14.5" viewBox="0 0 13 15" preserveAspectRatio="none"><path d="M0.8 0.6 H11.6 L12 4.2 H11 Q10.6 2.4 8.6 2.4 H4.4 L8.6 7.6 L3.8 12.4 H9 Q11 12.4 11.6 10 H12.4 L11.8 14.4 H0.6 V13.6 L5.6 8 L0.8 1.6 Z" fill="#585858"/></svg>
<div class="a" style="left:1069px;top:454.60px;font-size:15px;line-height:19px;color:#0b3a6a;">0</div>
<div class="a" style="right:647px;top:454.60px;font-size:15px;line-height:19px;color:#0b3a6a;">0.00</div>
<div class="a" style="left:1271px;top:454.60px;font-size:15px;line-height:19px;color:#0b3a6a;">0 Packets</div>
<svg style="left:1443px;top:472.6px" width="124" height="6" viewBox="0 0 124 6"><path d="M0.5 3 H120.7" stroke="#2f6a95" stroke-width="1.4"/><circle cx="120.7" cy="3" r="2.1" fill="#ff8a00"/></svg>
<svg style="left:1607px;top:454.5px" width="18" height="13" viewBox="0 0 18 13"><path d="M0 0 H1.7 V11.7 H17.7 V13 H0 Z" fill="#2a7de1"/><path d="M2.7 10.8 V5.9 L6.4 1.1 L11.3 5.9 L14.3 3.6 L16.4 10.8 Z" fill="#2a7de1"/></svg>
<svg style="left:1631.5px;top:455px" width="14" height="14" viewBox="0 0 14 14"><circle cx="6.5" cy="6.5" r="5.7" fill="none" stroke="#2a7de1" stroke-width="1.5"/><path d="M7 3 V7.4 H4.6" fill="none" stroke="#2a7de1" stroke-width="1.3"/></svg>
<div class="a" style="left:705px;top:485px;width:959px;height:1px;background:#dcdfe4;"></div>
<div class="a" style="left:705px;top:486px;width:959px;height:37px;background:#ffffff;"></div>
<div class="a" style="left:721px;top:492.60px;font-size:15px;line-height:19px;color:#0b3a6a;">6</div>
<div class="a" style="left:773px;top:492px;width:27px;height:23px;border-radius:12px;background:#00c800"></div>
<svg style="left:782px;top:499px" width="9" height="9" viewBox="0 0 9 9"><path d="M0.2 4.1 H8.8 M4.5 0 V8.2" stroke="#fff" stroke-width="2.2"/></svg>
<div class="a dl" style="left:840.8px;top:491.10px;font-size:15px;line-height:22px;color:#0b3a6a">Out Error</div>
<svg style="left:1018px;top:496px" width="11.5" height="14.5" viewBox="0 0 13 15" preserveAspectRatio="none"><path d="M0.8 0.6 H11.6 L12 4.2 H11 Q10.6 2.4 8.6 2.4 H4.4 L8.6 7.6 L3.8 12.4 H9 Q11 12.4 11.6 10 H12.4 L11.8 14.4 H0.6 V13.6 L5.6 8 L0.8 1.6 Z" fill="#585858"/></svg>
<div class="a" style="left:1069px;top:492.60px;font-size:15px;line-height:19px;color:#0b3a6a;">0</div>
<div class="a" style="right:647px;top:492.60px;font-size:15px;line-height:19px;color:#0b3a6a;">0.00</div>
<div class="a" style="left:1271px;top:492.60px;font-size:15px;line-height:19px;color:#0b3a6a;">0 Packets</div>
<svg style="left:1443px;top:510.6px" width="124" height="6" viewBox="0 0 124 6"><path d="M0.5 3 H120.7" stroke="#2f6a95" stroke-width="1.4"/><circle cx="120.7" cy="3" r="2.1" fill="#ff8a00"/></svg>
<svg style="left:1607px;top:492.5px" width="18" height="13" viewBox="0 0 18 13"><path d="M0 0 H1.7 V11.7 H17.7 V13 H0 Z" fill="#2a7de1"/><path d="M2.7 10.8 V5.9 L6.4 1.1 L11.3 5.9 L14.3 3.6 L16.4 10.8 Z" fill="#2a7de1"/></svg>
<svg style="left:1631.5px;top:493px" width="14" height="14" viewBox="0 0 14 14"><circle cx="6.5" cy="6.5" r="5.7" fill="none" stroke="#2a7de1" stroke-width="1.5"/><path d="M7 3 V7.4 H4.6" fill="none" stroke="#2a7de1" stroke-width="1.3"/></svg>
<div class="a" style="left:705px;top:523px;width:959px;height:1px;background:#dcdfe4;"></div>
<div class="a" style="left:705px;top:524px;width:959px;height:34px;background:#eaf0f8;"></div>
<div class="a" style="left:721px;top:530.60px;font-size:15px;line-height:19px;color:#0b3a6a;">7</div>
<div class="a dl" style="left:840.8px;top:529.10px;font-size:15px;line-height:22px;color:#0b3a6a">Out Queue</div>
<div class="a" style="left:1014px;top:535.11px;font-size:9.5px;line-height:12px;color:#808080;font-weight:bold;">AVG</div>
<div class="a" style="left:1069px;top:530.60px;font-size:15px;line-height:19px;color:#0b3a6a;">0</div>
<div class="a" style="right:322px;top:530.60px;font-size:15px;line-height:19px;color:#0b3a6a;">Insufficient data</div>
<svg style="left:1607px;top:530.5px" width="18" height="13" viewBox="0 0 18 13"><path d="M0 0 H1.7 V11.7 H17.7 V13 H0 Z" fill="#2a7de1"/><path d="M2.7 10.8 V5.9 L6.4 1.1 L11.3 5.9 L14.3 3.6 L16.4 10.8 Z" fill="#2a7de1"/></svg>
<svg style="left:1631.5px;top:531px" width="14" height="14" viewBox="0 0 14 14"><circle cx="6.5" cy="6.5" r="5.7" fill="none" stroke="#93bdf0" stroke-width="1.5"/><path d="M7 3 V7.4 H4.6" fill="none" stroke="#93bdf0" stroke-width="1.3"/></svg>
<div class="a" style="left:705px;top:558px;width:959px;height:1px;background:#dcdfe4;"></div>
<div class="a" style="left:705px;top:559px;width:959px;height:41px;background:#ffffff;"></div>
<div class="a" style="left:721px;top:565.60px;font-size:15px;line-height:19px;color:#0b3a6a;">8</div>
<div class="a" style="left:773px;top:565px;width:27px;height:23px;border-radius:12px;background:#00c800"></div>
<svg style="left:782px;top:572px" width="9" height="9" viewBox="0 0 9 9"><path d="M0.2 4.1 H8.8 M4.5 0 V8.2" stroke="#fff" stroke-width="2.2"/></svg>
<div class="a" style="left:840.8px;top:564.10px;font-size:15px;line-height:22px;color:#0b3a6a">In Load</div>
<div class="a" style="left:1014px;top:570.11px;font-size:9.5px;line-height:12px;color:#808080;font-weight:bold;">AVG</div>
<div class="a" style="left:1069px;top:565.60px;font-size:15px;line-height:19px;color:#0b3a6a;">3</div>
<div class="a" style="right:647px;top:565.60px;font-size:15px;line-height:19px;color:#0b3a6a;">0.00</div>
<div class="a" style="left:1271px;top:565.60px;font-size:15px;line-height:19px;color:#0b3a6a;">0.01 %</div>
<div class="a" style="left:1271px;top:587px;width:115px;height:6px;background:#e8eaec;"></div>
<svg style="left:1435px;top:559px" width="140" height="40" viewBox="0 0 1888 539"><path d="M115,112 L150,365 L1130,375 L1160,352 L1190,355 L1215,378 L1245,352 L1310,352 L1335,375 L1700,375 L1735,365" fill="none" stroke="#36699a" stroke-width="17.5" stroke-linejoin="round"/><circle cx="150" cy="365" r="31" fill="#80ff00"/><circle cx="115" cy="112" r="31" fill="#ff00a0"/><circle cx="1735" cy="365" r="31" fill="#ff8a00"/></svg>
<svg style="left:1607px;top:565.5px" width="18" height="13" viewBox="0 0 18 13"><path d="M0 0 H1.7 V11.7 H17.7 V13 H0 Z" fill="#2a7de1"/><path d="M2.7 10.8 V5.9 L6.4 1.1 L11.3 5.9 L14.3 3.6 L16.4 10.8 Z" fill="#2a7de1"/></svg>
<svg style="left:1631.5px;top:566px" width="14" height="14" viewBox="0 0 14 14"><circle cx="6.5" cy="6.5" r="5.7" fill="none" stroke="#2a7de1" stroke-width="1.5"/><path d="M7 3 V7.4 H4.6" fill="none" stroke="#2a7de1" stroke-width="1.3"/></svg>
<div class="a" style="left:705px;top:600px;width:959px;height:1px;background:#dcdfe4;"></div>
<div class="a" style="left:705px;top:601px;width:959px;height:41px;background:#eaf0f8;"></div>
<div class="a" style="left:721px;top:607.60px;font-size:15px;line-height:19px;color:#0b3a6a;">9</div>
<div class="a" style="left:773px;top:607px;width:27px;height:23px;border-radius:12px;background:#00c800"></div>
<svg style="left:782px;top:614px" width="9" height="9" viewBox="0 0 9 9"><path d="M0.2 4.1 H8.8 M4.5 0 V8.2" stroke="#fff" stroke-width="2.2"/></svg>
<div class="a" style="left:840.8px;top:606.10px;font-size:15px;line-height:22px;color:#0b3a6a">Out Load</div>
<div class="a" style="left:1014px;top:612.11px;font-size:9.5px;line-height:12px;color:#808080;font-weight:bold;">AVG</div>
<div class="a" style="left:1069px;top:607.60px;font-size:15px;line-height:19px;color:#0b3a6a;">2</div>
<div class="a" style="right:647px;top:607.60px;font-size:15px;line-height:19px;color:#3e8e1e;">1.00</div>
<div class="a" style="left:1271px;top:607.60px;font-size:15px;line-height:19px;color:#0b3a6a;">0.01 %</div>
<div class="a" style="left:1271px;top:629px;width:115px;height:6px;background:#e8eaec;"></div>
<svg style="left:1435px;top:601px" width="140" height="40" viewBox="0 0 1888 539"><path d="M115,360 L150,370 L1090,375 L1105,350 L1130,375 L1185,165 L1220,305 L1297,130 L1340,375 L1490,375 L1510,350 L1530,375 L1570,375 L1625,270 L1710,375 L1735,350 L1735,375 L115,375 Z" fill="#f2f2f2"/><path d="M115,360 L150,370 L1090,375 L1105,350 L1130,375 L1185,165 L1220,305 L1297,130 L1340,375 L1490,375 L1510,350 L1530,375 L1570,375 L1625,270 L1710,375 L1735,350" fill="none" stroke="#36699a" stroke-width="17.5" stroke-linejoin="round"/><circle cx="150" cy="370" r="31" fill="#80ff00"/><circle cx="1295" cy="112" r="31" fill="#ff00a0"/><circle cx="1735" cy="350" r="31" fill="#ff8a00"/></svg>
<svg style="left:1607px;top:607.5px" width="18" height="13" viewBox="0 0 18 13"><path d="M0 0 H1.7 V11.7 H17.7 V13 H0 Z" fill="#2a7de1"/><path d="M2.7 10.8 V5.9 L6.4 1.1 L11.3 5.9 L14.3 3.6 L16.4 10.8 Z" fill="#2a7de1"/></svg>
<svg style="left:1631.5px;top:608px" width="14" height="14" viewBox="0 0 14 14"><circle cx="6.5" cy="6.5" r="5.7" fill="none" stroke="#2a7de1" stroke-width="1.5"/><path d="M7 3 V7.4 H4.6" fill="none" stroke="#2a7de1" stroke-width="1.3"/></svg>
<div class="a" style="left:705px;top:642px;width:959px;height:1px;background:#dcdfe4;"></div>
<div class="a" style="left:705px;top:643px;width:959px;height:37px;background:#ffffff;"></div>
<div class="a" style="left:721px;top:649.60px;font-size:15px;line-height:19px;color:#0b3a6a;">10</div>
<div class="a" style="left:773px;top:649px;width:27px;height:23px;border-radius:12px;background:#00c800"></div>
<svg style="left:782px;top:656px" width="9" height="9" viewBox="0 0 9 9"><path d="M0.2 4.1 H8.8 M4.5 0 V8.2" stroke="#fff" stroke-width="2.2"/></svg>
<div class="a dl" style="left:840.8px;top:648.10px;font-size:15px;line-height:22px;color:#0b3a6a">In Traffic</div>
<div class="a" style="left:1014px;top:654.11px;font-size:9.5px;line-height:12px;color:#808080;font-weight:bold;">AVG</div>
<div class="a" style="left:1069px;top:649.60px;font-size:15px;line-height:19px;color:#0b3a6a;">4</div>
<div class="a" style="right:647px;top:649.60px;font-size:15px;line-height:19px;color:#3e8e1e;">6.00</div>
<div class="a" style="left:1271px;top:649.60px;font-size:15px;line-height:19px;color:#0b3a6a;">60.10 K bps</div>
<svg style="left:1435px;top:643px" width="140" height="40" viewBox="0 0 1888 539"><path d="M115,112 L165,368 L1130,375 L1160,352 L1190,355 L1215,378 L1245,352 L1310,352 L1335,375 L1610,375 L1640,350 L1690,375 L1735,350" fill="none" stroke="#36699a" stroke-width="17.5" stroke-linejoin="round"/><circle cx="165" cy="368" r="31" fill="#80ff00"/><circle cx="115" cy="112" r="31" fill="#ff00a0"/><circle cx="1735" cy="350" r="31" fill="#ff8a00"/></svg>
<svg style="left:1607px;top:649.5px" width="18" height="13" viewBox="0 0 18 13"><path d="M0 0 H1.7 V11.7 H17.7 V13 H0 Z" fill="#2a7de1"/><path d="M2.7 10.8 V5.9 L6.4 1.1 L11.3 5.9 L14.3 3.6 L16.4 10.8 Z" fill="#2a7de1"/></svg>
<svg style="left:1631.5px;top:650px" width="14" height="14" viewBox="0 0 14 14"><circle cx="6.5" cy="6.5" r="5.7" fill="none" stroke="#2a7de1" stroke-width="1.5"/><path d="M7 3 V7.4 H4.6" fill="none" stroke="#2a7de1" stroke-width="1.3"/></svg>
<div class="a" style="left:705px;top:680px;width:959px;height:1px;background:#dcdfe4;"></div>
<div class="a" style="left:705px;top:681px;width:959px;height:37px;background:#eaf0f8;"></div>
<div class="a" style="left:721px;top:687.60px;font-size:15px;line-height:19px;color:#0b3a6a;">11</div>
<div class="a" style="left:773px;top:687px;width:27px;height:23px;border-radius:12px;background:#00c800"></div>
<svg style="left:782px;top:694px" width="9" height="9" viewBox="0 0 9 9"><path d="M0.2 4.1 H8.8 M4.5 0 V8.2" stroke="#fff" stroke-width="2.2"/></svg>
<div class="a dl" style="left:840.8px;top:686.10px;font-size:15px;line-height:22px;color:#0b3a6a">Out Traffic</div>
<div class="a" style="left:1014px;top:692.11px;font-size:9.5px;line-height:12px;color:#808080;font-weight:bold;">AVG</div>
<div class="a" style="left:1069px;top:687.60px;font-size:15px;line-height:19px;color:#0b3a6a;">2</div>
<div class="a" style="right:647px;top:687.60px;font-size:15px;line-height:19px;color:#3e8e1e;">12.00</div>
<div class="a" style="left:1271px;top:687.60px;font-size:15px;line-height:19px;color:#0b3a6a;">77.95 K bps</div>
<svg style="left:1435px;top:681px" width="140" height="40" viewBox="0 0 1888 539"><path d="M115,350 L140,375 L1090,375 L1105,350 L1130,375 L1185,165 L1220,305 L1297,130 L1340,375 L1490,375 L1510,350 L1530,375 L1570,375 L1625,270 L1710,375 L1735,350 L1735,375 L115,375 Z" fill="#f2f2f2"/><path d="M115,350 L140,375 L1090,375 L1105,350 L1130,375 L1185,165 L1220,305 L1297,130 L1340,375 L1490,375 L1510,350 L1530,375 L1570,375 L1625,270 L1710,375 L1735,350" fill="none" stroke="#36699a" stroke-width="17.5" stroke-linejoin="round"/><circle cx="520" cy="370" r="31" fill="#80ff00"/><circle cx="1295" cy="112" r="31" fill="#ff00a0"/><circle cx="1735" cy="350" r="31" fill="#ff8a00"/></svg>
<svg style="left:1607px;top:687.5px" width="18" height="13" viewBox="0 0 18 13"><path d="M0 0 H1.7 V11.7 H17.7 V13 H0 Z" fill="#2a7de1"/><path d="M2.7 10.8 V5.9 L6.4 1.1 L11.3 5.9 L14.3 3.6 L16.4 10.8 Z" fill="#2a7de1"/></svg>
<svg style="left:1631.5px;top:688px" width="14" height="14" viewBox="0 0 14 14"><circle cx="6.5" cy="6.5" r="5.7" fill="none" stroke="#2a7de1" stroke-width="1.5"/><path d="M7 3 V7.4 H4.6" fill="none" stroke="#2a7de1" stroke-width="1.3"/></svg>
<div class="a" style="left:705px;top:718px;width:959px;height:1px;background:#dcdfe4;"></div>
<div class="a" style="left:705px;top:719px;width:959px;height:37px;background:#ffffff;"></div>
<div class="a" style="left:721px;top:725.60px;font-size:15px;line-height:19px;color:#0b3a6a;">12</div>
<div class="a" style="left:773px;top:725px;width:27px;height:23px;border-radius:12px;background:#00c800"></div>
<svg style="left:782px;top:732px" width="9" height="9" viewBox="0 0 9 9"><path d="M0.2 4.1 H8.8 M4.5 0 V8.2" stroke="#fff" stroke-width="2.2"/></svg>
<div class="a dl" style="left:840.8px;top:724.10px;font-size:15px;line-height:22px;color:#0b3a6a">In Volume</div>
<svg style="left:1018px;top:729px" width="11.5" height="14.5" viewBox="0 0 13 15" preserveAspectRatio="none"><path d="M0.8 0.6 H11.6 L12 4.2 H11 Q10.6 2.4 8.6 2.4 H4.4 L8.6 7.6 L3.8 12.4 H9 Q11 12.4 11.6 10 H12.4 L11.8 14.4 H0.6 V13.6 L5.6 8 L0.8 1.6 Z" fill="#585858"/></svg>
<div class="a" style="left:1069px;top:725.60px;font-size:15px;line-height:19px;color:#0b3a6a;">4</div>
<div class="a" style="right:647px;top:725.60px;font-size:15px;line-height:19px;color:#3e8e1e;">47.00</div>
<div class="a" style="left:1271px;top:725.60px;font-size:15px;line-height:19px;color:#0b3a6a;">440.98 K Bytes</div>
<svg style="left:1435px;top:719px" width="140" height="40" viewBox="0 0 1888 539"><path d="M115,112 L165,368 L1130,375 L1160,352 L1190,355 L1215,378 L1245,352 L1290,352 L1300,375 L1610,375 L1640,350 L1690,375 L1735,350" fill="none" stroke="#36699a" stroke-width="17.5" stroke-linejoin="round"/><circle cx="165" cy="368" r="31" fill="#80ff00"/><circle cx="115" cy="112" r="31" fill="#ff00a0"/><circle cx="1735" cy="350" r="31" fill="#ff8a00"/></svg>
<svg style="left:1607px;top:725.5px" width="18" height="13" viewBox="0 0 18 13"><path d="M0 0 H1.7 V11.7 H17.7 V13 H0 Z" fill="#2a7de1"/><path d="M2.7 10.8 V5.9 L6.4 1.1 L11.3 5.9 L14.3 3.6 L16.4 10.8 Z" fill="#2a7de1"/></svg>
<svg style="left:1631.5px;top:726px" width="14" height="14" viewBox="0 0 14 14"><circle cx="6.5" cy="6.5" r="5.7" fill="none" stroke="#2a7de1" stroke-width="1.5"/><path d="M7 3 V7.4 H4.6" fill="none" stroke="#2a7de1" stroke-width="1.3"/></svg>
<div class="a" style="left:705px;top:756px;width:959px;height:1px;background:#dcdfe4;"></div>
<div class="a" style="left:705px;top:757px;width:959px;height:37px;background:#eaf0f8;"></div>
<div class="a" style="left:721px;top:763.60px;font-size:15px;line-height:19px;color:#0b3a6a;">13</div>
<div class="a" style="left:773px;top:763px;width:27px;height:23px;border-radius:12px;background:#00c800"></div>
<svg style="left:782px;top:770px" width="9" height="9" viewBox="0 0 9 9"><path d="M0.2 4.1 H8.8 M4.5 0 V8.2" stroke="#fff" stroke-width="2.2"/></svg>
<div class="a dl" style="left:840.8px;top:762.10px;font-size:15px;line-height:22px;color:#0b3a6a">Out Volume</div>
<svg style="left:1018px;top:767px" width="11.5" height="14.5" viewBox="0 0 13 15" preserveAspectRatio="none"><path d="M0.8 0.6 H11.6 L12 4.2 H11 Q10.6 2.4 8.6 2.4 H4.4 L8.6 7.6 L3.8 12.4 H9 Q11 12.4 11.6 10 H12.4 L11.8 14.4 H0.6 V13.6 L5.6 8 L0.8 1.6 Z" fill="#585858"/></svg>
<div class="a" style="left:1069px;top:763.60px;font-size:15px;line-height:19px;color:#0b3a6a;">2</div>
<div class="a" style="right:647px;top:763.60px;font-size:15px;line-height:19px;color:#3e8e1e;">9.00</div>
<div class="a" style="left:1271px;top:763.60px;font-size:15px;line-height:19px;color:#0b3a6a;">571.94 K Bytes</div>
<svg style="left:1435px;top:757px" width="140" height="40" viewBox="0 0 1888 539"><path d="M115,350 L140,375 L1090,375 L1105,350 L1130,375 L1178,120 L1220,290 L1285,140 L1310,375 L1500,375 L1530,370 L1570,375 L1625,240 L1710,375 L1735,350 L1735,375 L115,375 Z" fill="#f2f2f2"/><path d="M115,350 L140,375 L1090,375 L1105,350 L1130,375 L1178,120 L1220,290 L1285,140 L1310,375 L1500,375 L1530,370 L1570,375 L1625,240 L1710,375 L1735,350" fill="none" stroke="#36699a" stroke-width="17.5" stroke-linejoin="round"/><circle cx="1530" cy="370" r="31" fill="#80ff00"/><circle cx="1175" cy="112" r="31" fill="#ff00a0"/><circle cx="1735" cy="350" r="31" fill="#ff8a00"/></svg>
<svg style="left:1607px;top:763.5px" width="18" height="13" viewBox="0 0 18 13"><path d="M0 0 H1.7 V11.7 H17.7 V13 H0 Z" fill="#2a7de1"/><path d="M2.7 10.8 V5.9 L6.4 1.1 L11.3 5.9 L14.3 3.6 L16.4 10.8 Z" fill="#2a7de1"/></svg>
<svg style="left:1631.5px;top:764px" width="14" height="14" viewBox="0 0 14 14"><circle cx="6.5" cy="6.5" r="5.7" fill="none" stroke="#2a7de1" stroke-width="1.5"/><path d="M7 3 V7.4 H4.6" fill="none" stroke="#2a7de1" stroke-width="1.3"/></svg>
<div class="a" style="left:705px;top:794px;width:959px;height:1px;background:#dcdfe4;"></div>
<div class="a" style="left:705px;top:795px;width:959px;height:41px;background:#ffffff;"></div>
<div class="a" style="left:721px;top:801.60px;font-size:15px;line-height:19px;color:#0b3a6a;">14</div>
<div class="a" style="left:773px;top:801px;width:27px;height:23px;border-radius:12px;background:#00c800"></div>
<svg style="left:782px;top:808px" width="9" height="9" viewBox="0 0 9 9"><path d="M0.2 4.1 H8.8 M4.5 0 V8.2" stroke="#fff" stroke-width="2.2"/></svg>
<div class="a dl" style="left:840.8px;top:800.10px;font-size:15px;line-height:22px;color:#0b3a6a">Unicast</div>
<div class="a" style="left:1014px;top:806.11px;font-size:9.5px;line-height:12px;color:#808080;font-weight:bold;">AVG</div>
<div class="a" style="left:1069px;top:801.60px;font-size:15px;line-height:19px;color:#0b3a6a;">4</div>
<div class="a" style="right:647px;top:801.60px;font-size:15px;line-height:19px;color:#3e8e1e;">2.00</div>
<div class="a" style="left:1271px;top:801.60px;font-size:15px;line-height:19px;color:#0b3a6a;">93.27 %</div>
<div class="a" style="left:1271px;top:823px;width:115px;height:6px;background:#e8eaec;"></div>
<div class="a" style="left:1271px;top:823px;width:107px;height:6px;background:#2a7de1;"></div>
<svg style="left:1435px;top:795px" width="140" height="40" viewBox="0 0 1888 539"><path d="M115,220 L165,365 L270,355 L290,185 L320,220 L355,355 L430,340 L480,380 L500,360 L525,375 L550,330 L580,185 L610,210 L650,305 L700,305 L735,290 L790,340 L850,375 L880,370 L900,325 L930,355 L990,355 L1050,320 L1080,340 L1130,290 L1170,150 L1185,135 L1220,155 L1260,130 L1295,110 L1310,140 L1340,235 L1370,220 L1420,225 L1480,170 L1530,205 L1600,140 L1640,135 L1700,175 L1735,148 L1735,375 L115,375 Z" fill="#f2f2f2"/><path d="M115,220 L165,365 L270,355 L290,185 L320,220 L355,355 L430,340 L480,380 L500,360 L525,375 L550,330 L580,185 L610,210 L650,305 L700,305 L735,290 L790,340 L850,375 L880,370 L900,325 L930,355 L990,355 L1050,320 L1080,340 L1130,290 L1170,150 L1185,135 L1220,155 L1260,130 L1295,110 L1310,140 L1340,235 L1370,220 L1420,225 L1480,170 L1530,205 L1600,140 L1640,135 L1700,175 L1735,148" fill="none" stroke="#36699a" stroke-width="17.5" stroke-linejoin="round"/><circle cx="165" cy="365" r="31" fill="#80ff00"/><circle cx="1295" cy="110" r="31" fill="#ff00a0"/><circle cx="1735" cy="148" r="31" fill="#ff8a00"/></svg>
<svg style="left:1607px;top:801.5px" width="18" height="13" viewBox="0 0 18 13"><path d="M0 0 H1.7 V11.7 H17.7 V13 H0 Z" fill="#2a7de1"/><path d="M2.7 10.8 V5.9 L6.4 1.1 L11.3 5.9 L14.3 3.6 L16.4 10.8 Z" fill="#2a7de1"/></svg>
<svg style="left:1631.5px;top:802px" width="14" height="14" viewBox="0 0 14 14"><circle cx="6.5" cy="6.5" r="5.7" fill="none" stroke="#2a7de1" stroke-width="1.5"/><path d="M7 3 V7.4 H4.6" fill="none" stroke="#2a7de1" stroke-width="1.3"/></svg>
<div class="a" style="left:705px;top:836px;width:959px;height:1px;background:#dcdfe4;"></div>
<div class="a" style="left:705px;top:837px;width:959px;height:41px;background:#eaf0f8;"></div>
<div class="a" style="left:721px;top:843.60px;font-size:15px;line-height:19px;color:#0b3a6a;">15</div>
<div class="a" style="left:773px;top:843px;width:27px;height:23px;border-radius:12px;background:#00c800"></div>
<svg style="left:782px;top:850px" width="9" height="9" viewBox="0 0 9 9"><path d="M0.2 4.1 H8.8 M4.5 0 V8.2" stroke="#fff" stroke-width="2.2"/></svg>
<div class="a dl" style="left:840.8px;top:842.10px;font-size:15px;line-height:22px;color:#0b3a6a">Multicast</div>
<div class="a" style="left:1014px;top:848.11px;font-size:9.5px;line-height:12px;color:#808080;font-weight:bold;">AVG</div>
<div class="a" style="left:1069px;top:843.60px;font-size:15px;line-height:19px;color:#0b3a6a;">4</div>
<div class="a" style="right:647px;top:843.60px;font-size:15px;line-height:19px;color:#ff2020;">-1.00</div>
<div class="a" style="left:1271px;top:843.60px;font-size:15px;line-height:19px;color:#0b3a6a;">0.20 %</div>
<div class="a" style="left:1271px;top:865px;width:115px;height:6px;background:#e8eaec;"></div>
<svg style="left:1435px;top:837px" width="140" height="40" viewBox="0 0 1888 539"><path d="M115,270 L135,240 L175,120 L200,135 L270,140 L290,305 L320,270 L355,145 L380,155 L470,155 L500,120 L530,145 L555,185 L580,305 L605,295 L650,190 L760,190 L800,140 L840,112 L870,120 L900,175 L970,135 L1050,175 L1080,160 L1140,215 L1175,350 L1260,360 L1295,365 L1320,310 L1345,290 L1390,305 L1420,290 L1480,340 L1510,305 L1540,305 L1620,360 L1660,355 L1735,330 L1735,375 L115,375 Z" fill="#f2f2f2"/><path d="M115,270 L135,240 L175,120 L200,135 L270,140 L290,305 L320,270 L355,145 L380,155 L470,155 L500,120 L530,145 L555,185 L580,305 L605,295 L650,190 L760,190 L800,140 L840,112 L870,120 L900,175 L970,135 L1050,175 L1080,160 L1140,215 L1175,350 L1260,360 L1295,365 L1320,310 L1345,290 L1390,305 L1420,290 L1480,340 L1510,305 L1540,305 L1620,360 L1660,355 L1735,330" fill="none" stroke="#36699a" stroke-width="17.5" stroke-linejoin="round"/><circle cx="1295" cy="365" r="31" fill="#80ff00"/><circle cx="840" cy="112" r="31" fill="#ff00a0"/><circle cx="1735" cy="330" r="31" fill="#ff8a00"/></svg>
<svg style="left:1607px;top:843.5px" width="18" height="13" viewBox="0 0 18 13"><path d="M0 0 H1.7 V11.7 H17.7 V13 H0 Z" fill="#2a7de1"/><path d="M2.7 10.8 V5.9 L6.4 1.1 L11.3 5.9 L14.3 3.6 L16.4 10.8 Z" fill="#2a7de1"/></svg>
<svg style="left:1631.5px;top:844px" width="14" height="14" viewBox="0 0 14 14"><circle cx="6.5" cy="6.5" r="5.7" fill="none" stroke="#2a7de1" stroke-width="1.5"/><path d="M7 3 V7.4 H4.6" fill="none" stroke="#2a7de1" stroke-width="1.3"/></svg>
<div class="a" style="left:705px;top:878px;width:959px;height:1px;background:#dcdfe4;"></div>
<div class="a" style="left:705px;top:879px;width:959px;height:41px;background:#ffffff;"></div>
<div class="a" style="left:721px;top:885.60px;font-size:15px;line-height:19px;color:#0b3a6a;">16</div>
<div class="a" style="left:773px;top:885px;width:27px;height:23px;border-radius:12px;background:#00c800"></div>
<svg style="left:782px;top:892px" width="9" height="9" viewBox="0 0 9 9"><path d="M0.2 4.1 H8.8 M4.5 0 V8.2" stroke="#fff" stroke-width="2.2"/></svg>
<div class="a dl" style="left:840.8px;top:884.10px;font-size:15px;line-height:22px;color:#0b3a6a">Broadcast</div>
<div class="a" style="left:1014px;top:890.11px;font-size:9.5px;line-height:12px;color:#808080;font-weight:bold;">AVG</div>
<div class="a" style="left:1069px;top:885.60px;font-size:15px;line-height:19px;color:#0b3a6a;">4</div>
<div class="a" style="right:647px;top:885.60px;font-size:15px;line-height:19px;color:#ff2020;">-17.00</div>
<div class="a" style="left:1271px;top:885.60px;font-size:15px;line-height:19px;color:#0b3a6a;">6.53 %</div>
<div class="a" style="left:1271px;top:907px;width:115px;height:6px;background:#e8eaec;"></div>
<div class="a" style="left:1271px;top:907px;width:8px;height:6px;background:#2a7de1;"></div>
<svg style="left:1435px;top:879px" width="140" height="40" viewBox="0 0 1888 539"><path d="M115,290 L135,260 L165,112 L190,140 L270,140 L290,305 L320,270 L355,145 L380,155 L440,155 L475,125 L490,130 L520,120 L545,150 L580,305 L605,295 L650,190 L700,190 L735,205 L800,140 L850,120 L880,125 L900,175 L940,140 L980,140 L1050,175 L1080,160 L1140,215 L1180,350 L1215,340 L1260,360 L1295,365 L1320,300 L1345,260 L1390,265 L1420,260 L1480,325 L1530,290 L1600,355 L1650,360 L1735,330 L1735,375 L115,375 Z" fill="#f2f2f2"/><path d="M115,290 L135,260 L165,112 L190,140 L270,140 L290,305 L320,270 L355,145 L380,155 L440,155 L475,125 L490,130 L520,120 L545,150 L580,305 L605,295 L650,190 L700,190 L735,205 L800,140 L850,120 L880,125 L900,175 L940,140 L980,140 L1050,175 L1080,160 L1140,215 L1180,350 L1215,340 L1260,360 L1295,365 L1320,300 L1345,260 L1390,265 L1420,260 L1480,325 L1530,290 L1600,355 L1650,360 L1735,330" fill="none" stroke="#36699a" stroke-width="17.5" stroke-linejoin="round"/><circle cx="1295" cy="365" r="31" fill="#80ff00"/><circle cx="165" cy="112" r="31" fill="#ff00a0"/><circle cx="1735" cy="330" r="31" fill="#ff8a00"/></svg>
<svg style="left:1607px;top:885.5px" width="18" height="13" viewBox="0 0 18 13"><path d="M0 0 H1.7 V11.7 H17.7 V13 H0 Z" fill="#2a7de1"/><path d="M2.7 10.8 V5.9 L6.4 1.1 L11.3 5.9 L14.3 3.6 L16.4 10.8 Z" fill="#2a7de1"/></svg>
<svg style="left:1631.5px;top:886px" width="14" height="14" viewBox="0 0 14 14"><circle cx="6.5" cy="6.5" r="5.7" fill="none" stroke="#2a7de1" stroke-width="1.5"/><path d="M7 3 V7.4 H4.6" fill="none" stroke="#2a7de1" stroke-width="1.3"/></svg>
<div class="a" style="left:705px;top:920px;width:959px;height:1px;background:#dcdfe4;"></div>
<div class="a" style="left:705px;top:921px;width:959px;height:59px;background:#eaf0f8;"></div>
<div class="a" style="left:721px;top:927.60px;font-size:15px;line-height:19px;color:#0b3a6a;">17</div>
<div class="a" style="left:773px;top:927px;width:27px;height:23px;border-radius:12px;background:#00c800"></div>
<svg style="left:782px;top:934px" width="9" height="9" viewBox="0 0 9 9"><path d="M0.2 4.1 H8.8 M4.5 0 V8.2" stroke="#fff" stroke-width="2.2"/></svg>
<div class="a" style="left:840.8px;top:926.10px;font-size:15px;line-height:22px;color:#0b3a6a">ifAlias</div>
<div class="a" style="left:1069px;top:927.60px;font-size:15px;line-height:19px;color:#0b3a6a;">0</div>
<div class="a" style="left:1271px;top:927.60px;font-size:15px;line-height:19px;color:#0b3a6a;">INSIDE</div>
<div class="a" style="right:322px;top:927.60px;font-size:15px;line-height:19px;color:#0b3a6a;">N/A</div>
<svg style="left:1607px;top:927.5px" width="18" height="13" viewBox="0 0 18 13"><path d="M0 0 H1.7 V11.7 H17.7 V13 H0 Z" fill="#93bdf0"/><path d="M2.7 10.8 V5.9 L6.4 1.1 L11.3 5.9 L14.3 3.6 L16.4 10.8 Z" fill="#93bdf0"/></svg>
<svg style="left:1631.5px;top:928px" width="14" height="14" viewBox="0 0 14 14"><circle cx="6.5" cy="6.5" r="5.7" fill="none" stroke="#2a7de1" stroke-width="1.5"/><path d="M7 3 V7.4 H4.6" fill="none" stroke="#2a7de1" stroke-width="1.3"/></svg>
<div class="a" style="left:1000px;top:284px;width:166px;height:43px;background:#fff;border:1px solid #c8c8c8;box-shadow:0 4px 8px rgba(0,0,0,.22)"></div>
<svg style="left:1071px;top:278px" width="14" height="8" viewBox="0 0 14 8"><path d="M0 6.8 L6.3 0.5 L12.6 6.8" fill="#fff" stroke="#c8c8c8" stroke-width="1"/></svg>
<div class="a" style="left:1072px;top:284px;width:11px;height:2px;background:#fff;"></div>
<div class="a" style="left:1016.4px;top:295.75px;font-size:14px;line-height:18px;"><span style="color:#2c5a8a">Outliers or </span><span style="color:#ff2a2a">Anomalies</span></div>
<svg style="left:1076px;top:258px" width="17" height="16" viewBox="0 0 17 16"><path d="M8.5 1 Q12 1 12.3 5.5 Q12.6 10.5 15.2 13.8 H1.8 Q4.4 10.5 4.7 5.5 Q5 1 8.5 1 Z" fill="none" stroke="#0b3a6a" stroke-width="1.1"/></svg>
<svg style="left:1078px;top:266px" width="20" height="25" viewBox="0 0 20 25"><path d="M6.2 1.2 Q7.8 0.2 9 1.3 V10 Q9.5 9 10.8 9.4 Q11.8 9.8 11.8 11 Q12.6 10.1 13.8 10.6 Q14.6 11 14.6 12 Q15.6 11.3 16.8 11.9 Q17.6 12.4 17.6 13.6 V18.6 Q17.6 23.8 12 23.8 Q8.5 23.8 6.8 21 L1.7 15.8 Q0.6 14.5 1.6 13.5 Q2.8 12.6 4.2 13.6 L6.2 15 Z" fill="#fff" stroke="#111" stroke-width="1.2"/><path d="M11.8 11 V14.5 M14.6 12 V14.8" stroke="#111" stroke-width="1"/></svg></body></html>
